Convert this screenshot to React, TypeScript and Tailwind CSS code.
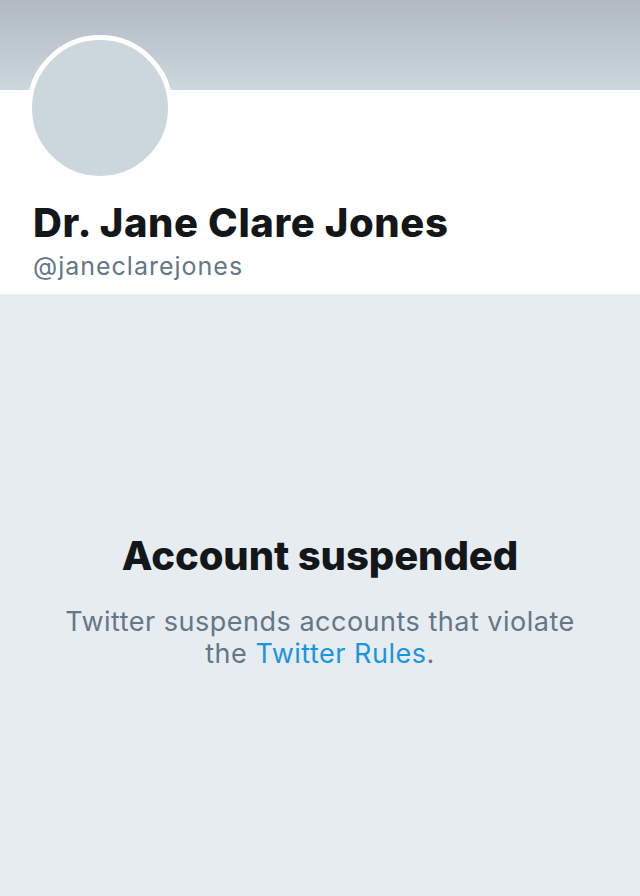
import React from "react";

const App: React.FC = () => {
  return (
    <div
      className="flex h-[896px] w-[640px] flex-col overflow-hidden bg-[#e6ecf0]"
      style={{ fontFamily: "Inter, 'Liberation Sans', sans-serif" }}
    >
      {/* Banner */}
      <div className="h-[90px] w-full bg-gradient-to-b from-[#b1bac3] to-[#ccd6dd]" />

      {/* Profile header */}
      <div className="bg-white px-[33px] pb-[13px]">
        <div className="relative -mt-[55px] ml-[-6px] h-[146px] w-[146px] rounded-full border-[5px] border-white bg-[#ccd6dd]" />
        <h1 className="mt-[18px] text-[40px] font-extrabold leading-[48px] tracking-[0.6px] text-[#14171a]">
          Dr. Jane Clare Jones
        </h1>
        <p className="mt-[4px] text-[25px] leading-[30px] tracking-[1px] text-[#657786]">
          @janeclarejones
        </p>
      </div>

      {/* Suspended notice */}
      <div className="flex flex-col items-center pt-[238px] text-center">
        <h2 className="text-[40px] font-extrabold leading-[48px] tracking-[-0.1px] text-[#14171a]">
          Account suspended
        </h2>
        <p className="mt-[26px] w-[540px] text-[27px] leading-[32px] tracking-[0.5px] text-[#657786]">
          Twitter suspends accounts that violate the <span className="text-[#1b95e0]">Twitter Rules</span>.
        </p>
      </div>
    </div>
  );
};

export default App;
